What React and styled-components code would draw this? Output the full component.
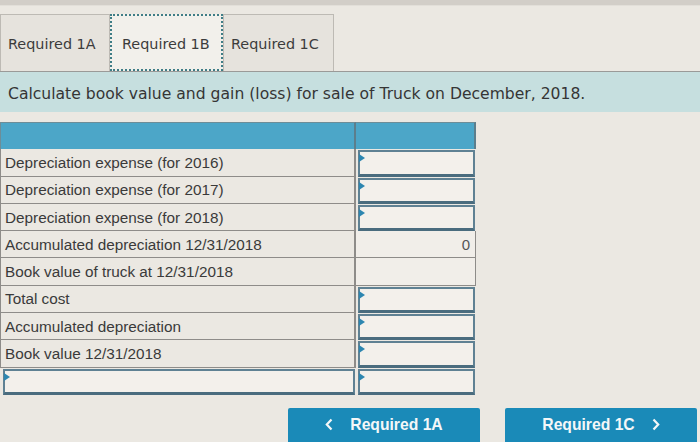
import styled, { createGlobalStyle } from "styled-components";

const Global = createGlobalStyle`
  html, body {
    margin: 0;
    padding: 0;
    background: #ebe8e2;
    overflow: hidden;
  }
`;

const Page = styled.div`
  width: 700px;
  height: 442px;
  background: #ebe8e2;
  font-family: "DejaVu Sans", Verdana, sans-serif;
  color: #3a3a3a;
`;

const TopBand = styled.div`
  height: 5px;
  background: #d2cec8;
  border-bottom: 1px solid #e2dfd9;
`;

const TabRow = styled.div`
  display: flex;
  padding-top: 8px;
`;

const Tab = styled.div`
  box-sizing: border-box;
  width: ${(p) => p.w}px;
  height: 57px;
  display: flex;
  align-items: center;
  padding-left: ${(p) => (p.active ? 10 : 7)}px;
  padding-top: 2px;
  font-size: 14.4px;
  color: #3c3c3c;
  background: ${(p) => (p.active ? "#f2f0eb" : "#e6e3dd")};
  border: 1px solid #bdbab4;
  border-bottom: none;
  white-space: nowrap;
  ${(p) =>
    p.active &&
    `
    border: 2px dotted #3f7d86;
    border-bottom: 2px dotted #3f7d86;
  `}
`;

const Banner = styled.div`
  height: 41px;
  box-sizing: border-box;
  border-top: 1px solid #9a9a98;
  background: #c6dfdf;
  display: flex;
  align-items: center;
  padding-left: 8px;
  padding-top: 3px;
  font-size: 15.6px;
  color: #353535;
  white-space: nowrap;
`;

const Table = styled.div`
  margin-top: 10px;
  width: 476px;
  display: grid;
  grid-template-columns: 356px 120px;
  grid-auto-rows: 27.3px;
`;

const HeadCell = styled.div`
  background: #4ca6c8;
  border-top: 1px solid #6d8d98;
  border-right: 2px solid #5c7e8c;
  box-sizing: border-box;
  ${(p) => p.first && "border-left: 1px solid #6d8d98;"}
`;

const Label = styled.div`
  box-sizing: border-box;
  background: #ebe8e2;
  border: 1px solid #8e8c89;
  border-top: none;
  border-right: 2px solid #8e8c89;
  display: flex;
  align-items: center;
  padding-left: 4px;
  padding-top: 1px;
  font-family: "Liberation Sans", Arial, sans-serif;
  font-size: 15.3px;
  color: #3a3a3a;
`;

const Value = styled.div`
  box-sizing: border-box;
  background: #f1eee9;
  border-bottom: 1px solid #8e8c89;
  border-right: 1px solid #8e8c89;
  display: flex;
  align-items: center;
  justify-content: flex-end;
  padding-right: 5px;
  font-family: "Liberation Sans", Arial, sans-serif;
  font-size: 15px;
  color: #555;
`;

const InputCell = styled.div`
  position: relative;
  box-sizing: border-box;
  margin: 1px 1px 0 ${(p) => (p.left ? 3 : 2)}px;
  background: #f3f0eb;
  border: 2px solid #5f8193;
  border-bottom: 3px solid #4a6c7e;
  &::before {
    content: "";
    position: absolute;
    left: -1px;
    top: 2px;
    border-top: 4px solid transparent;
    border-bottom: 4px solid transparent;
    border-left: 6px solid #2d86b0;
  }
`;

const Footer = styled.div`
  display: flex;
  justify-content: flex-end;
  gap: 25px;
  padding-right: 3px;
  margin-top: 13px;
`;

const NavButton = styled.button`
  width: 192px;
  height: 40px;
  border: none;
  border-radius: 2px;
  background: #1a8ab8;
  color: #f4f7f8;
  font-family: "Liberation Sans", Arial, sans-serif;
  font-weight: bold;
  font-size: 15.7px;
  display: flex;
  align-items: center;
  justify-content: center;
  gap: 17px;
  padding: 0 0 6px;
`;

const Chevron = ({ dir }) => (
  <svg width="8" height="13" viewBox="0 0 8 13">
    <path
      d={dir === "left" ? "M6.5 1.5 L1.8 6.5 L6.5 11.5" : "M1.5 1.5 L6.2 6.5 L1.5 11.5"}
      stroke="#f4f7f8"
      strokeWidth="2.2"
      fill="none"
    />
  </svg>
);

const rows = [
  { label: "Depreciation expense (for 2016)", input: true },
  { label: "Depreciation expense (for 2017)", input: true },
  { label: "Depreciation expense (for 2018)", input: true },
  { label: "Accumulated depreciation 12/31/2018", value: "0" },
  { label: "Book value of truck at 12/31/2018", value: "" },
  { label: "Total cost", input: true },
  { label: "Accumulated depreciation", input: true },
  { label: "Book value 12/31/2018", input: true },
];

export default function App() {
  return (
    <Page>
      <Global />
      <TopBand />
      <TabRow>
        <Tab w={110}>Required 1A</Tab>
        <Tab w={113} active>
          Required 1B
        </Tab>
        <Tab w={111}>Required 1C</Tab>
      </TabRow>
      <Banner>
        Calculate book value and gain (loss) for sale of Truck on December, 2018.
      </Banner>
      <Table>
        <HeadCell first />
        <HeadCell />
        {rows.map((r) => [
          <Label key={r.label}>{r.label}</Label>,
          r.input ? (
            <InputCell key={r.label + "-in"} />
          ) : (
            <Value key={r.label + "-v"}>{r.value}</Value>
          ),
        ])}
        <InputCell left />
        <InputCell />
      </Table>
      <Footer>
        <NavButton>
          <Chevron dir="left" />
          Required 1A
        </NavButton>
        <NavButton>
          Required 1C
          <Chevron dir="right" />
        </NavButton>
      </Footer>
    </Page>
  );
}
